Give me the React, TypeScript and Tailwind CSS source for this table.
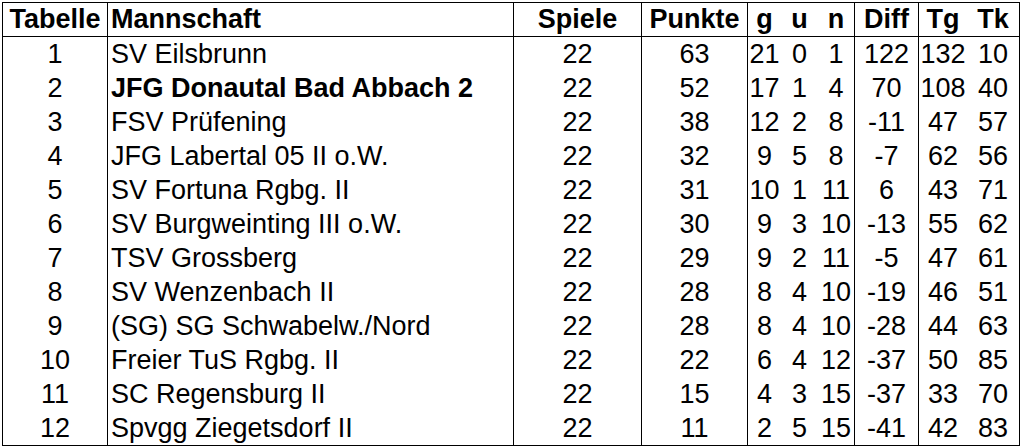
import React from "react";

type Row = [string, string, string, string, string, string, string, string, string, string];

const rows: Row[] = [
  ["1", "SV Eilsbrunn", "22", "63", "21", "0", "1", "122", "132", "10"],
  ["2", "JFG Donautal Bad Abbach 2", "22", "52", "17", "1", "4", "70", "108", "40"],
  ["3", "FSV Prüfening", "22", "38", "12", "2", "8", "-11", "47", "57"],
  ["4", "JFG Labertal 05 II o.W.", "22", "32", "9", "5", "8", "-7", "62", "56"],
  ["5", "SV Fortuna Rgbg. II", "22", "31", "10", "1", "11", "6", "43", "71"],
  ["6", "SV Burgweinting III o.W.", "22", "30", "9", "3", "10", "-13", "55", "62"],
  ["7", "TSV Grossberg", "22", "29", "9", "2", "11", "-5", "47", "61"],
  ["8", "SV Wenzenbach II", "22", "28", "8", "4", "10", "-19", "46", "51"],
  ["9", "(SG) SG Schwabelw./Nord", "22", "28", "8", "4", "10", "-28", "44", "63"],
  ["10", "Freier TuS Rgbg. II", "22", "22", "6", "4", "12", "-37", "50", "85"],
  ["11", "SC Regensburg II", "22", "15", "4", "3", "15", "-37", "33", "70"],
  ["12", "Spvgg Ziegetsdorf II", "22", "11", "2", "5", "15", "-41", "42", "83"],
];

const header: Row = ["Tabelle", "Mannschaft", "Spiele", "Punkte", "g", "u", "n", "Diff", "Tg", "Tk"];

const cellCls = [
  "border-r border-black justify-center",
  "border-r border-black justify-start pl-[3px]",
  "border-r border-black justify-center",
  "border-r border-black justify-center",
  "justify-center",
  "justify-center",
  "border-r border-black justify-center",
  "border-r border-black justify-center",
  "justify-center",
  "justify-center",
];

function TableRow({ r, bold, headerRow }: { r: Row; bold?: boolean; headerRow?: boolean }) {
  return (
    <div
      className={
        "grid grid-cols-[105px_406px_128px_106px_33px_37px_37px_64px_48px_52px] h-[34px] " +
        (headerRow ? "border-b border-black font-bold" : "")
      }
    >
      {r.map((c, i) => (
        <div
          key={i}
          className={
            "flex items-center whitespace-nowrap overflow-visible " +
            cellCls[i] +
            (bold && i === 1 ? " font-bold" : "")
          }
        >
          {c}
        </div>
      ))}
    </div>
  );
}

export default function App() {
  return (
    <div
      className="w-[1024px] h-[448px] bg-white text-black pt-[2px] pl-[2px] overflow-hidden"
      style={{ fontFamily: '"Liberation Sans", Arial, sans-serif' }}
    >
      <div className="w-[1018px] border border-black text-[27px] leading-none">
        <TableRow r={header} headerRow />
        {rows.map((r, i) => (
          <TableRow key={i} r={r} bold={i === 1} />
        ))}
      </div>
    </div>
  );
}
